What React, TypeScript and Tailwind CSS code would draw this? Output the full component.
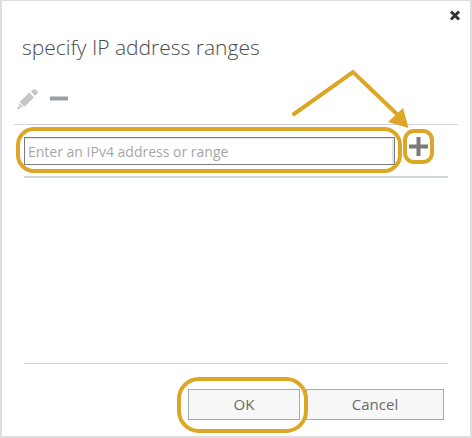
import type { ReactNode } from 'react';

function Highlight({ className, children }: { className: string; children: ReactNode }) {
  return (
    <div className="relative flex">
      {children}
      <span className={`pointer-events-none absolute border-4 border-[#dca726] ${className}`} />
    </div>
  );
}

function PencilIcon() {
  return (
    <svg width="21" height="21" viewBox="0 0 21 21" fill="#c6c6c6">
      <path d="M12.2 3.6 17 8.4 7.4 17.8 2.6 13Z" />
      <path d="M13.8 2.6 15.6.9Q17.6-.6 19.6 1.2 21.5 3.2 20 5L18 6.8Z" />
      <path d="M2.3 14.3 6.2 18.2 4.2 18.6 2 16.4Z" />
      <circle cx="1.9" cy="18.9" r="1.4" />
    </svg>
  );
}

export default function App() {
  return (
    <div className="bg-white font-['Open_Sans',sans-serif]">
      <form
        role="dialog"
        aria-labelledby="dialog-title"
        className="border-2 border-t border-[#dcdedf] pb-4"
        onSubmit={(e) => e.preventDefault()}
      >
        <div className="flex justify-end pt-2 pr-[9px]">
          <button type="button" aria-label="Close" className="flex size-3 items-center justify-center">
            <svg width="12" height="12" viewBox="0 0 12 12" fill="none" stroke="#333" strokeWidth="3">
              <path d="M2 2.500 10 10.500M10 2.500 2 10.500" />
            </svg>
          </button>
        </div>

        <h1 id="dialog-title" className="mt-3 pl-5 text-[21px] leading-7 font-light text-[#4a4a4a]">
          specify IP address ranges
        </h1>

        {/* Toolbar */}
        <div className="mt-7 ml-[15px] flex items-center gap-3">
          <button type="button" aria-label="Edit">
            <PencilIcon />
          </button>
          <button type="button" aria-label="Remove">
            <svg width="18" height="21" viewBox="0 0 18 21" fill="#98a1a2">
              <path d="M0 7.500h18v4H0z" />
            </svg>
          </button>
        </div>

        <hr className="mt-[14px] mr-3 ml-3 border-[#d2d5d8]" />

        {/* Address entry */}
        <div className="mt-3 mr-[42px] ml-[22px] flex items-start gap-[14px]">
          <div className="min-w-0 flex-1">
            <Highlight className="-top-[10px] -right-[7px] -bottom-2 -left-2 rounded-[18px]">
              <input
                type="text"
                aria-label="IPv4 address or range"
                placeholder="Enter an IPv4 address or range"
                className="h-7 w-full border border-[#7b7b7b] bg-white px-[3px] text-[14px] text-[#444] shadow-[inset_-2px_1px_0_#e4e4e4] outline-none placeholder:text-[#a6a6a6]"
              />
            </Highlight>
          </div>
          <Highlight className="-inset-x-[6px] -top-2 -bottom-2 rounded-[11px]">
            <button type="button" aria-label="Add">
              <svg width="19" height="19" viewBox="0 0 19 19" fill="none" stroke="#7a7a7a" strokeWidth="4">
                <path d="M9.5 0v19M0 9.5h19" />
              </svg>
            </button>
            <svg
              className="pointer-events-none absolute right-0 bottom-[27px] max-w-none"
              width="136"
              height="60"
              viewBox="292 69 136 60"
              aria-hidden="true"
            >
              <path d="M294 114 353 72 400 117" fill="none" stroke="#dca726" strokeWidth="4" strokeLinecap="round" />
              <path d="M388 122 403 108 408.500 128Z" fill="#dca726" />
            </svg>
          </Highlight>
        </div>

        <div className="mt-[11px] mr-[22px] ml-[22px] h-[188px] border-t-2 border-b border-t-[#cfd6da] border-b-[#cdd1d4]" />

        {/* Actions */}
        <div className="mt-[25px] mr-[26px] flex justify-end gap-[6px]">
          <Highlight className="-top-3 -right-2 -bottom-[13px] -left-[11px] rounded-[22px]">
            <button
              type="submit"
              className="h-[31px] w-[112px] border border-[#a3adad] bg-[#f7f7f7] text-[15px] text-[#6a6a6a]"
            >
              OK
            </button>
          </Highlight>
          <button
            type="button"
            className="h-[31px] w-[138px] border border-[#a3adad] bg-[#f7f7f7] text-[15px] text-[#6a6a6a]"
          >
            Cancel
          </button>
        </div>
      </form>
    </div>
  );
}
